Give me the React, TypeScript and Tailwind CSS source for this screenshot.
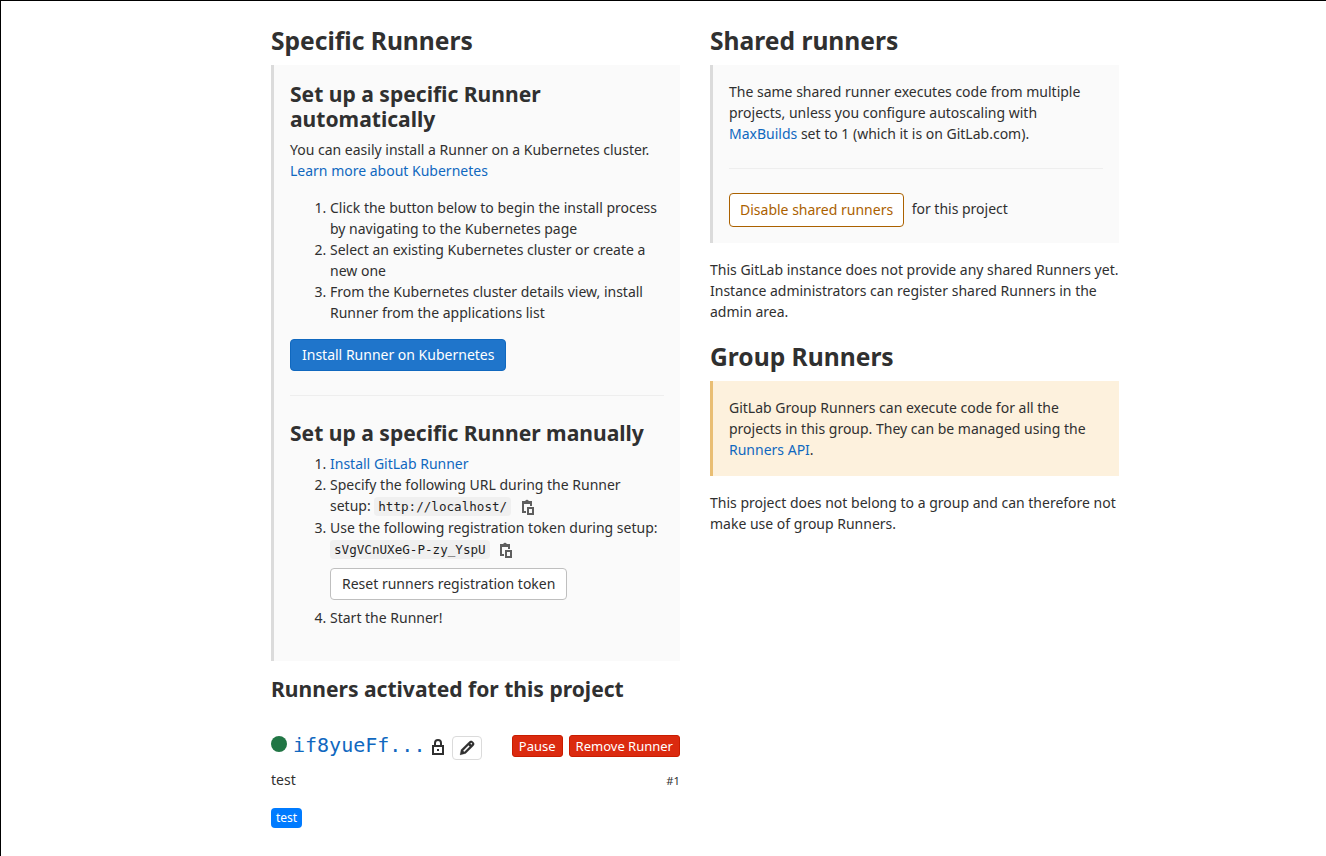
import React from 'react';

const Clipboard = () => (
  <svg width="16" height="16" viewBox="0 0 16 16" fill="none" stroke="#5e5e5e" strokeWidth="2">
    <path d="M6 13H3V3h8v4" />
    <path d="M4 5V2h1.2a2 2 0 0 1 3.6 0H10v3z" fill="#5e5e5e" stroke="none" />
    <path d="M8 9h5v6H8z" />
  </svg>
);

const Lock = () => (
  <svg width="16" height="16" viewBox="0 0 16 16" fill="none" stroke="#303030" strokeWidth="2">
    <path d="M3 7h10v8H3z" />
    <path d="M5 7V4a3 3 0 0 1 6 0v3" />
    <path d="M7 10h2v2H7z" fill="#303030" stroke="none" />
  </svg>
);

const Pencil = () => (
  <svg width="16" height="16" viewBox="0 0 16 16" fill="#303030">
    <path fillRule="evenodd" d="M10.1 1.7a2.7 2.7 0 0 1 3.9 0l.3.3a2.7 2.7 0 0 1 0 3.9l-7.6 7.6L1 15l1-5.2zM9.5 5.3 4.1 10.7l1.2 1.2 5.4-5.4zM11.8 3.1l-.5.5 1.1 1.1.5-.5a.8.8 0 0 0 0-1.1.8.8 0 0 0-1.1 0z" stroke="#303030" strokeWidth=".2" />
  </svg>
);

const A = ({ children }: { children: React.ReactNode }) => (
  <a href="#" className="text-[#1068bf]">{children}</a>
);
const H3 = ({ children }: { children: React.ReactNode }) => (
  <h3 className="mb-2.5 text-[24.6px] leading-[29px] font-bold">{children}</h3>
);
const H4 = ({ children }: { children: React.ReactNode }) => (
  <h4 className="mb-2 text-[21.07px] leading-[25px] font-bold">{children}</h4>
);
const Code = ({ children }: { children: React.ReactNode }) => (
  <code className="h-[19px] rounded bg-[#f0f0f0] px-1 font-['DejaVu_Sans_Mono',monospace] text-[12.6px] leading-[19px] text-[#1f1f1f]">{children}</code>
);

export default function App() {
  return (
    <div className="h-[856px] overflow-hidden border-t border-l border-black bg-white pl-[270px] pt-[25px] font-['Noto_Sans',sans-serif] text-sm leading-[21px] text-[#303030]">
      <div className="grid w-[848px] grid-cols-2 gap-x-[30px]">
        <section>
          <H3>Specific Runners</H3>
          <div className="h-[596px] border-l-[3px] border-[#dbdbdb] bg-[#fafafa] p-4">
            <H4>Set up a specific Runner automatically</H4>
            <p className="mb-4">
              You can easily install a Runner on a Kubernetes cluster.<br />
              <A>Learn more about Kubernetes</A>
            </p>
            <ol className="mb-4 list-decimal pl-10">
              <li>Click the button below to begin the install process by navigating to the Kubernetes page</li>
              <li>Select an existing Kubernetes cluster or create a new one</li>
              <li>From the Kubernetes cluster details view, install Runner from the applications list</li>
            </ol>
            <button className="block h-8 rounded border border-[#1068bf] bg-[#1f75cb] px-[11px] pb-0.5 text-white">Install Runner on Kubernetes</button>
            <hr className="my-6 border-[#eeeeee]" />
            <H4>Set up a specific Runner manually</H4>
            <ol className="list-decimal pl-10">
              <li><A>Install GitLab Runner</A></li>
              <li>
                Specify the following URL during the Runner
                <div className="flex h-[22px] items-center">
                  <span className="mr-[3.6px] mb-0.5">setup:</span><Code>http://localhost/</Code><span className="mt-px ml-[8.4px]"><Clipboard /></span>
                </div>
              </li>
              <li>
                <span className="whitespace-nowrap">Use the following registration token during setup:</span>
                <div className="flex h-[22px] items-center">
                  <Code>sVgVCnUXeG-P-zy_YspU</Code><span className="mt-px ml-2"><Clipboard /></span>
                </div>
                <button className="mt-2 mb-[7px] block h-8 rounded border border-[#bfbfbf] bg-white px-[11px] pb-0.5">Reset runners registration token</button>
              </li>
              <li>Start the Runner!</li>
            </ol>
          </div>
          <div className="mt-[15px]"><H4>Runners activated for this project</H4></div>
          <div className="mt-[35px] flex h-6 items-center">
            <span className="mb-2 size-4 rounded-full bg-[#217645]" />
            <a href="#" className="mb-1.5 ml-1.5 font-['DejaVu_Sans_Mono',monospace] text-[20px] text-[#1068bf]">if8yueFf...</a>
            <span className="mb-0.5 ml-[5px]"><Lock /></span>
            <button className="ml-1.5 flex h-6 w-[30px] items-center justify-center rounded border border-[#dbdbdb] bg-white"><Pencil /></button>
            <div className="mb-1 ml-auto flex gap-1.5 text-[13px] leading-5 text-white">
              <button className="h-[22px] rounded-[3px] border border-[#c91c00] bg-[#db2a0f] px-1.5">Pause</button>
              <button className="h-[22px] rounded-[3px] border border-[#c91c00] bg-[#db2a0f] px-1.5">Remove Runner</button>
            </div>
          </div>
          <div className="mt-[9px] flex justify-between">
            <span>test</span><small className="mt-px text-[11.2px]">#1</small>
          </div>
          <span className="mt-[17px] block h-5 w-[31px] rounded bg-[#007bff] text-center text-xs leading-5 text-white">test</span>
        </section>
        <section>
          <H3>Shared runners</H3>
          <div className="border-l-[3px] border-[#dbdbdb] bg-[#fafafa] p-4">
            <p>The same shared runner executes code from multiple projects, unless you configure autoscaling with <A>MaxBuilds</A> set to 1 (which it is on GitLab.com).</p>
            <hr className="my-6 border-[#eeeeee]" />
            <div className="flex items-start">
              <button className="h-[34px] rounded border border-[#ab6100] bg-white px-2.5 pb-0.5 text-[#ab6100]">Disable shared runners</button>
              <span className="ml-[7.5px] mt-[5px]">for this project</span>
            </div>
          </div>
          <p className="mt-4 mb-5">This GitLab instance does not provide any shared Runners yet. Instance administrators can register shared Runners in the admin area.</p>
          <H3>Group Runners</H3>
          <div className="border-l-[3px] border-[#e9be74] bg-[#fdf1dd] p-4">
            GitLab Group Runners can execute code for all the projects in this group. They can be managed using the <A>Runners API</A>.
          </div>
          <p className="mt-4">This project does not belong to a group and can therefore not make use of group Runners.</p>
        </section>
      </div>
    </div>
  );
}
